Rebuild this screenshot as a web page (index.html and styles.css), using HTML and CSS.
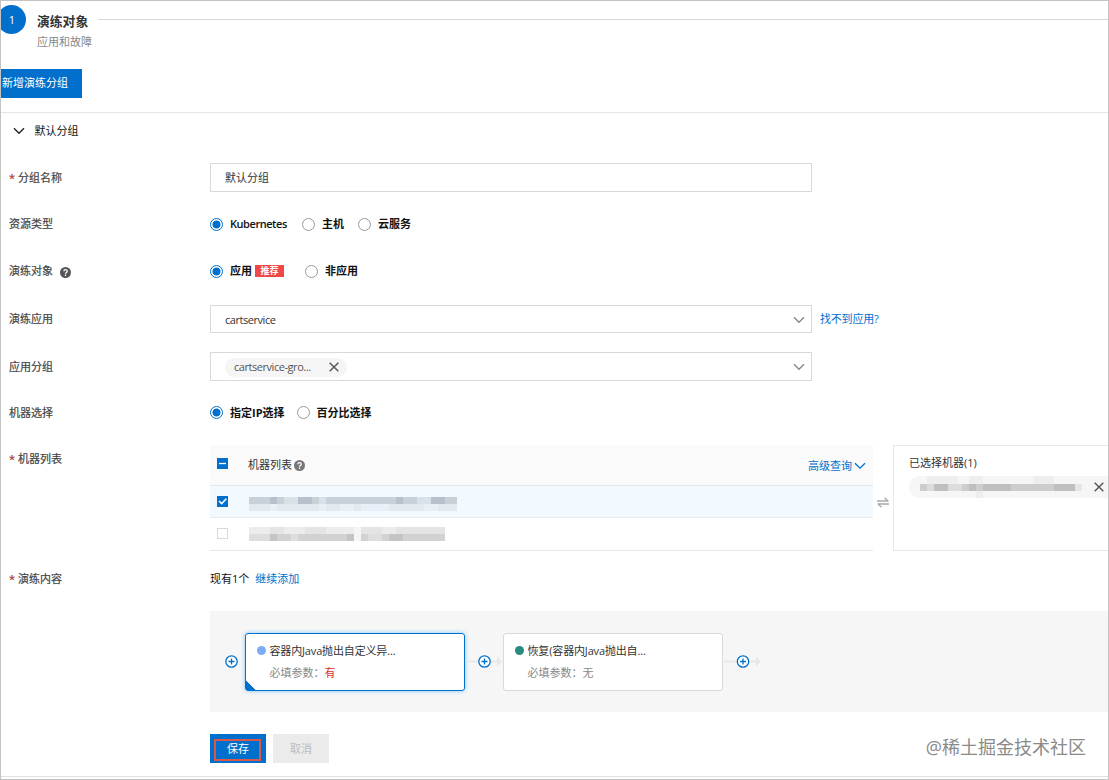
FILE: index.html
```html
<!DOCTYPE html>
<html lang="zh-CN">
<head>
    <meta charset="UTF-8">
    <meta name="viewport" content="width=device-width, initial-scale=1.0">
    <title>演练对象</title>
    <link rel="stylesheet" href="styles.css">
</head>
<body>
    <div class="page">
        <div class="step">
            <div class="step-num">1</div>
            <div class="step-text">
                <div class="step-title">演练对象</div>
                <div class="step-desc">应用和故障</div>
            </div>
            <div class="step-line"></div>
        </div>

        <button class="btn add-btn">新增演练分组</button>

        <div class="group-head">
            <svg width="12" height="8" viewBox="0 0 12 8"><path d="M1 1.2l5 5 5-5" fill="none" stroke="#222" stroke-width="1.4"/></svg>
            <span>默认分组</span>
        </div>

        <div class="row row-name">
            <div class="label required">分组名称</div>
            <div class="input">默认分组</div>
        </div>

        <div class="row row-type">
            <div class="label">资源类型</div>
            <div class="radios">
                <span class="radio checked"></span><span class="radio-text kube">Kubernetes</span>
                <span class="radio"></span><span class="radio-text host">主机</span>
                <span class="radio"></span><span class="radio-text">云服务</span>
            </div>
        </div>

        <div class="row row-target">
            <div class="label">演练对象
                <svg class="help" width="11" height="11" viewBox="0 0 12 12"><circle cx="6" cy="6" r="6" fill="#555"/><path d="M4.2 4.7c0-2.4 3.7-2.3 3.7-.1C7.9 5.9 6 5.900 6 7.300M6 8.300v1.400" fill="none" stroke="#fff" stroke-width="1.4"/></svg>
            </div>
            <div class="radios">
                <span class="radio checked"></span><span class="radio-text app">应用</span>
                <span class="tag">推荐</span>
                <span class="radio"></span><span class="radio-text">非应用</span>
            </div>
        </div>

        <div class="row row-app">
            <div class="label">演练应用</div>
            <div class="input select">
                <span class="latin">cartservice</span>
                <svg width="12" height="8" viewBox="0 0 12 8"><path d="M1 1.2l5 5 5-5" fill="none" stroke="#888" stroke-width="1.4"/></svg>
            </div>
            <a class="link not-found">找不到应用?</a>
        </div>

        <div class="row row-appgroup">
            <div class="label">应用分组</div>
            <div class="input select">
                <span class="chip"><span class="latin">cartservice-gro...</span>
                    <svg width="10" height="10" viewBox="0 0 10 10"><path d="M.7.7l8.6 8.6M9.3.7L.7 9.3" stroke="#555" stroke-width="1.4"/></svg>
                </span>
                <svg width="12" height="8" viewBox="0 0 12 8"><path d="M1 1.2l5 5 5-5" fill="none" stroke="#888" stroke-width="1.4"/></svg>
            </div>
        </div>

        <div class="row row-pick">
            <div class="label">机器选择</div>
            <div class="radios">
                <span class="radio checked"></span><span class="radio-text byip">指定IP选择</span>
                <span class="radio"></span><span class="radio-text">百分比选择</span>
            </div>
        </div>

        <div class="row row-machines">
            <div class="label required">机器列表</div>
            <div class="machines">
                <div class="m-row m-head">
                    <span class="check on"><svg width="11" height="11" viewBox="0 0 11 11"><path d="M2 5.5h7" stroke="#fff" stroke-width="1.3"/></svg></span>
                    <span class="m-title">机器列表</span>
                    <svg class="help" width="11" height="11" viewBox="0 0 12 12"><circle cx="6" cy="6" r="6" fill="#777"/><path d="M4.2 4.7c0-2.4 3.7-2.3 3.7-.1C7.9 5.9 6 5.9 6 7.300M6 8.300v1.400" fill="none" stroke="#fff" stroke-width="1.4"/></svg>
                    <a class="link more">高级查询
                        <svg width="12" height="8" viewBox="0 0 12 8"><path d="M1 1.2l5 5 5-5" fill="none" stroke="#0070cc" stroke-width="1.3"/></svg>
                    </a>
                </div>
                <div class="m-row m-selected">
                    <span class="check on"><svg width="11" height="11" viewBox="0 0 11 11"><path d="M2 5l2.6 2.6L9.3 2.7" fill="none" stroke="#fff" stroke-width="1.5"/></svg></span>
                    <svg class="masked" width="208" height="14" shape-rendering="crispEdges">
                        <rect width="208" height="7" fill="#c9d1d8"/>
                        <rect y="7" width="208" height="7" fill="#e9eff6"/>
                        <path d="M21 0h7v7h-7zM49 0h14v7h-14zM147 0h7v7h-7zM182 0h14v7h-14z" fill="#b8c0cb"/>
                        <path d="M35 0h14v7h-14zM70 0h7v7h-7zM168 0h14v7h-14z" fill="#d9e1e8"/>
                        <path d="M0 7h21v7H0zM28 7h42v7H28zM77 7h14v7H77zM105 7h7v7h-7zM140 7h35v7h-35zM189 7h19v7h-19z" fill="#e2e9ef"/>
                    </svg>
                </div>
                <div class="m-row m-plain">
                    <span class="check"></span>
                    <svg class="masked" width="196" height="14" shape-rendering="crispEdges">
                        <rect width="196" height="7" fill="#e4e4e4"/>
                        <rect y="7" width="196" height="7" fill="#d2d2d2"/>
                        <path d="M0 0h21v7H0zM35 0h21v7H35zM77 0h28v7H77zM133 0h14v7h-14z" fill="#ececec"/>
                        <path d="M0 7h21v7H0zM42 7h7v7h-7zM119 7h14v7h-14z" fill="#dedede"/>
                        <path d="M21 7h7v7h-7zM98 7h7v7h-7zM140 7h14v7h-14z" fill="#c4c4c4"/>
                        <path d="M105 0h7v14h-7z" fill="#f5f5f5"/>
                    </svg>
                </div>
            </div>
            <svg class="swap" width="12" height="11" viewBox="0 0 12 11"><path d="M0 4h11.5M7.5.8L11 4M12 7H.5M4.5 10.2L1 7" fill="none" stroke="#aaa" stroke-width="1.3"/></svg>
            <div class="chosen">
                <div class="chosen-title">已选择机器(1)</div>
                <div class="chosen-item">
                    <svg width="176" height="22" shape-rendering="crispEdges">
                        <path d="M18 0h31v8H18zM60 0h14v8H60zM124 0h21v8h-21zM67 15h7v7h-7z" fill="#eee"/>
                        <rect x="11" y="8" width="155" height="7" fill="#cdcdcd"/>
                        <path d="M18 8h7v7h-7zM39 8h14v7H39z" fill="#dcdcdc"/>
                        <path d="M25 8h14v7H25zM60 8h7v7h-7zM74 8h28v7H74zM145 8h21v7h-21z" fill="#bfbfbf"/>
                        <rect x="166" y="8" width="7" height="7" fill="#e6e6e6"/>
                    </svg>
                    <svg width="10" height="10" viewBox="0 0 10 10"><path d="M.7.7l8.6 8.6M9.3.7L.7 9.3" stroke="#555" stroke-width="1.4"/></svg>
                </div>
            </div>
        </div>

        <div class="row row-content">
            <div class="label required">演练内容</div>
            <div class="count">现有1个</div>
            <a class="link">继续添加</a>
        </div>

        <div class="flow">
            <svg class="plus" width="13" height="13" viewBox="0 0 13 13"><circle cx="6.5" cy="6.5" r="5.7" fill="#fff" stroke="#0070cc" stroke-width="1.3"/><path d="M3.5 6.5h6M6.5 3.5v6" stroke="#0070cc" stroke-width="1.3"/></svg>
            <div class="card active">
                <div class="card-title"><i class="dot"></i>容器内Java抛出自定义异...</div>
                <div class="card-param">必填参数：<b>有</b></div>
            </div>
            <svg class="arrow" width="38" height="13" viewBox="0 0 38 13"><path d="M1 6.5h32" stroke="#e8e8e8" stroke-width="2"/><path d="M32 1.5l5 5-5 5z" fill="#e8e8e8"/><circle cx="19.5" cy="6.5" r="5.7" fill="#fff" stroke="#0070cc" stroke-width="1.3"/><path d="M16.5 6.5h6M19.5 3.5v6" stroke="#0070cc" stroke-width="1.3"/></svg>
            <div class="card">
                <div class="card-title"><i class="dot green"></i>恢复(容器内Java抛出自...</div>
                <div class="card-param">必填参数：无</div>
            </div>
            <svg class="arrow" width="38" height="13" viewBox="0 0 38 13"><path d="M1 6.5h32" stroke="#e8e8e8" stroke-width="2"/><path d="M33 1.5l5 5-5 5z" fill="#e8e8e8"/><circle cx="20" cy="6.5" r="5.7" fill="#fff" stroke="#0070cc" stroke-width="1.3"/><path d="M17 6.5h6M20 3.5v6" stroke="#0070cc" stroke-width="1.3"/></svg>
        </div>

        <div class="footer">
            <button class="btn save-btn"><span>保存</span></button>
            <button class="btn cancel-btn">取消</button>
            <div class="watermark">@稀土掘金技术社区</div>
        </div>
    </div>
</body>
</html>
```

FILE: styles.css
```css
* {
    box-sizing: border-box;
}

body {
    margin: 0;
    font-family: "Open Sans", "Noto Sans CJK SC", sans-serif;
    font-size: 11px;
    line-height: 16px;
    color: #333;
    background: #fff;
}

svg {
    display: block;
    flex: none;
}

.page {
    width: 1109px;
    height: 780px;
    border: 1px solid #c4c4c4;
    overflow: hidden;
}

.step {
    display: flex;
    height: 68px;
}

.step-num {
    width: 29px;
    height: 29px;
    margin: 4px 0 0 -4px;
    padding-left: 1px;
    border-radius: 50%;
    background: #0070cc;
    color: #fff;
    text-align: center;
    line-height: 30px;
}

.step-text {
    margin-left: 11px;
    padding-top: 11px;
}

.step-title {
    font-size: 12.8px;
    font-weight: bold;
    line-height: 18px;
}

.step-desc {
    margin-top: 4px;
    color: #888;
}

.step-line {
    flex: 1;
    height: 1px;
    margin: 18px 0 0 6px;
    background: #d8d8d8;
}

.btn {
    display: block;
    border: none;
    padding: 0;
    height: 29px;
    font: inherit;
    color: #fff;
    background: #0070cc;
}

.add-btn {
    width: 81px;
    padding: 0 0 1px 1px;
    text-align: left;
}

.group-head {
    display: flex;
    align-items: center;
    gap: 10px;
    height: 35px;
    margin-top: 14px;
    padding: 1px 0 0 11.5px;
    border-top: 1px solid #e5e5e5;
    color: #111;
}

.row {
    display: flex;
    align-items: center;
    padding-left: 8px;
}

.row-name {
    height: 47px;
    margin-top: 7px;
}

.row-type {
    height: 46px;
}

.row-target {
    height: 48px;
}

.row-app {
    height: 48px;
}

.row-appgroup {
    height: 47px;
}

.row-pick {
    height: 45px;
}

.label {
    display: flex;
    align-items: center;
    flex: none;
    width: 201px;
    color: #444;
    -webkit-text-stroke: .2px #444;
}

.label .help {
    margin: 2px 0 0 7px;
}

.required::before {
    content: "*";
    width: 9px;
    color: #d93026;
}

.input {
    display: flex;
    align-items: center;
    width: 602px;
    height: 29px;
    padding: 1px 0 0 14px;
    border: 1px solid #d9d9d9;
}

.select {
    justify-content: space-between;
    padding-right: 6px;
}

.row-app .input {
    height: 28px;
}

.latin {
    letter-spacing: -.45px;
}

.chip {
    display: flex;
    align-items: center;
    justify-content: space-between;
    width: 122px;
    height: 19px;
    padding: 0 8px 0 9px;
    border-radius: 10px;
    background: #f5f5f5;
    color: #555;
}

.link {
    color: #0070cc;
}

.not-found {
    margin-left: 8px;
    letter-spacing: -.2px;
}

.radios {
    display: flex;
    align-items: center;
}

.radio {
    width: 13px;
    height: 13px;
    border: 1px solid #999;
    border-radius: 50%;
    background: #fff;
}

.radio.checked {
    border-color: #0070cc;
    background: radial-gradient(circle, #0070cc 3.6px, #fff 4.4px);
}

.radio-text {
    margin: 0 14px 0 7px;
    font-weight: bold;
    color: #111;
}

.kube {
    width: 58px;
    font-weight: 600;
    letter-spacing: -.45px;
}

.app {
    margin-right: 3px;
}

.byip {
    margin-right: 12px;
}

.tag {
    width: 29px;
    height: 12px;
    margin-right: 21px;
    background: #f04848;
    color: #fff;
    font-size: 9px;
    font-weight: bold;
    line-height: 12px;
    text-align: center;
}

.row-machines {
    align-items: flex-start;
    height: 126px;
    padding-top: 10px;
}

.row-machines > .label {
    padding-top: 6px;
}

.machines {
    width: 663px;
}

.m-row {
    display: flex;
    align-items: center;
    padding-left: 7px;
    border-bottom: 1px solid #e5e8ec;
}

.m-head {
    height: 41px;
    padding-right: 7px;
    background: #fafafa;
}

.m-selected {
    height: 32px;
    background: #f3faff;
}

.m-plain {
    height: 33px;
}

.check {
    width: 11px;
    height: 11px;
    margin-right: 21px;
    border: 1px solid #d9d9d9;
}

.check.on {
    border: none;
    background: #0070cc;
}

.m-head .check {
    margin: -3px 20px 0 0;
}

.m-selected .check {
    margin-top: -1px;
}

.m-plain .check {
    margin-top: -2px;
}

.m-selected .masked {
    margin-top: 5px;
}

.m-title {
    margin: -1px 2px 0 0;
}

.m-title + .help {
    margin-top: 1px;
}

.more {
    display: flex;
    align-items: center;
    gap: 2px;
    margin: 1px 0 0 auto;
}

.swap {
    margin: 52px 4px 0;
}

.chosen {
    flex: 1;
    height: 106px;
    padding: 9px 0 0 15px;
    border: 1px solid #e5e8ec;
    border-right: none;
}

.chosen-item {
    display: flex;
    align-items: center;
    gap: 9px;
    height: 22px;
    margin-top: 5px;
    border-radius: 11px 0 0 11px;
    background: #f6f6f6;
}

.row-content {
    height: 36px;
}

.count {
    margin-right: 6px;
    color: #111;
}

.flow {
    display: flex;
    align-items: center;
    height: 101px;
    margin: 14px 0 0 209px;
    padding-left: 15px;
    background: #f6f6f6;
}

.card {
    width: 220px;
    height: 58px;
    padding: 9px 0 0 11px;
    border: 1px solid #d9d9d9;
    border-radius: 3px;
    background: #fff;
}

.plus {
    margin-right: 7px;
}

.card.active {
    border-color: #0070cc;
    background: linear-gradient(45deg, #0070cc 7px, #fff 7px);
    box-shadow: 0 0 4px #80c4f5;
}

.card-title {
    display: flex;
    align-items: center;
    letter-spacing: -.15px;
}

.dot {
    width: 9px;
    height: 9px;
    margin-right: 3.5px;
    border-radius: 50%;
    background: #7aadf5;
}

.dot.green {
    background: #2b8a80;
}

.card-param {
    margin: 6px 0 0 12.5px;
    color: #888;
}

.card-param b {
    font-weight: normal;
    color: #d93026;
}

.footer {
    display: flex;
    height: 65px;
    padding: 22px 0 0 209px;
    border-bottom: 1px solid #e0e0e0;
}

.save-btn {
    width: 56px;
    padding: 5px 5px 2px 4px;
}

.save-btn span {
    display: block;
    height: 22px;
    padding-left: 1px;
    border: 2px solid #d9584a;
    line-height: 16px;
}

.cancel-btn {
    width: 56px;
    margin-left: 7px;
    background: #ebebeb;
    color: #bbb;
}

.watermark {
    margin: 0 22px 0 auto;
    font-size: 18px;
    line-height: 26px;
    color: #8a8a8a;
}
```
